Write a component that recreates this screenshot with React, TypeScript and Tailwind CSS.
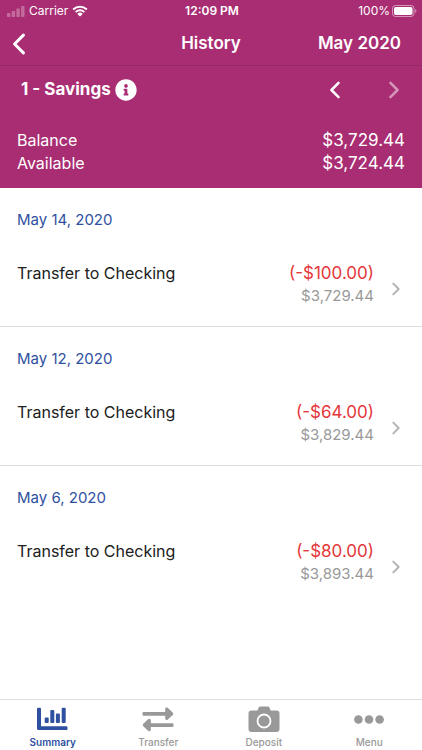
import type { ReactNode } from "react";
import { FaInfoCircle } from "react-icons/fa";

type Transaction = { date: string; title: string; amount: string; balance: string };

const transactions: Transaction[] = [
  { date: "May 14, 2020", title: "Transfer to Checking", amount: "(-$100.00)", balance: "$3,729.44" },
  { date: "May 12, 2020", title: "Transfer to Checking", amount: "(-$64.00)", balance: "$3,829.44" },
  { date: "May 6, 2020", title: "Transfer to Checking", amount: "(-$80.00)", balance: "$3,893.44" },
];

function Chevron({ left = false, className }: { left?: boolean; className: string }) {
  return (
    <svg viewBox="0 0 10 18" fill="none" stroke="currentColor" strokeLinecap="round" strokeLinejoin="round" className={className} aria-hidden="true">
      <path d={left ? "M9 1 1 9l8 8" : "M1 1l8 8-8 8"} vectorEffect="non-scaling-stroke" />
    </svg>
  );
}

function StatusBar() {
  return (
    <div className="grid h-[22px] grid-cols-[1fr_auto_1fr] items-center pr-[5px] pl-[7px] text-xs">
      <div className="flex items-center gap-1">
        <svg viewBox="0 0 18 12" className="h-3 w-[18px] fill-white/30" aria-hidden="true">
          <rect x="0" y="8" width="3.4" height="4" rx="0.7" />
          <rect x="4.7" y="6" width="3.4" height="6" rx="0.7" />
          <rect x="9.4" y="3.5" width="3.4" height="8.5" rx="0.7" />
          <rect x="14.1" y="1" width="3.4" height="11" rx="0.7" />
        </svg>
        <span>Carrier</span>
        <svg viewBox="0 0 16 12" className="h-3 w-4" aria-hidden="true">
          <path d="M1.2 4.5a9.8 9.8 0 0 1 13.6 0M3.7 7.1a6.2 6.2 0 0 1 8.6 0" fill="none" stroke="currentColor" strokeWidth="2" />
          <path d="M8 11.6 5.3 8.9a3.9 3.9 0 0 1 5.4 0Z" fill="currentColor" />
        </svg>
      </div>
      <span className="text-center font-semibold">12:09 PM</span>
      <div className="flex items-center justify-end gap-[2px]">
        <span>100%</span>
        <svg viewBox="0 0 25 12" className="h-3 w-[25px]" aria-hidden="true">
          <rect x="0.5" y="0.5" width="21.5" height="11" rx="3" fill="none" stroke="currentColor" strokeOpacity="0.5" />
          <rect x="2" y="2" width="18.5" height="8" rx="1.7" fill="currentColor" />
          <path d="M23.2 4v4c1.6-.7 1.6-3.3 0-4Z" fill="currentColor" fillOpacity="0.5" />
        </svg>
      </div>
    </div>
  );
}

function TransactionRow({ item, last }: { item: Transaction; last: boolean }) {
  return (
    <li className={last ? "" : "border-b border-[#dedee0]"}>
      <h2 className="px-[17px] pt-[22px] text-[15px] leading-5 text-[#2f50a0]">{item.date}</h2>
      <button type="button" className="flex w-full items-start pt-[31px] pr-[22px] pb-[19px] pl-[17px] text-left">
        <span className="flex-1 text-base leading-6 text-[#202020]">{item.title}</span>
        <span className="flex flex-col text-right">
          <span className="text-[17px] leading-6 text-[#e5373b]">{item.amount}</span>
          <span className="text-[15px] leading-[22px] text-[#999999]">{item.balance}</span>
        </span>
        <Chevron className="mt-[22px] ml-[18px] h-3 w-2 overflow-visible stroke-2 text-[#b4b4b4]" />
      </button>
    </li>
  );
}

function Tab({ label, active = false, children }: { label: string; active?: boolean; children: ReactNode }) {
  return (
    <button
      type="button"
      aria-current={active ? "page" : undefined}
      className={`flex flex-col items-center pt-1 text-[10px] leading-4 ${active ? "font-semibold text-[#2f50a0]" : "font-medium text-[#999999]"}`}
    >
      <span className="flex h-[30px] items-center">{children}</span>
      {label}
    </button>
  );
}

export default function App() {
  return (
    <div className="flex min-h-screen flex-col bg-white font-['Inter','Liberation_Sans',sans-serif]">
      <header className="bg-[#a92d72] text-white">
        <StatusBar />
        <div className="grid h-11 grid-cols-[1fr_auto_1fr] items-center border-b border-[#96286a] px-[21px] text-[17px] font-semibold">
          <button type="button" aria-label="Back" className="-ml-2 justify-self-start">
            <Chevron left className="h-5 w-3 overflow-visible stroke-3" />
          </button>
          <h1>History</h1>
          <button type="button" className="justify-self-end">May 2020</button>
        </div>
        <div className="flex h-12 items-center pr-[23px] pl-[21px]">
          <span className="text-[17px] font-bold">1 - Savings</span>
          <button type="button" aria-label="Account details" className="ml-1">
            <FaInfoCircle className="size-[22px]" />
          </button>
          <div className="ml-auto flex gap-[49px]">
            <button type="button" aria-label="Previous account">
              <Chevron left className="h-4 w-[10px] overflow-visible stroke-[2.5]" />
            </button>
            <button type="button" aria-label="Next account" disabled className="text-white/50">
              <Chevron className="h-4 w-[10px] overflow-visible stroke-[2.5]" />
            </button>
          </div>
        </div>
        <dl className="grid grid-cols-2 px-[17px] pt-[15px] pb-[13px] text-[17px] leading-[23px]">
          <dt className="text-base leading-[23px]">Balance</dt>
          <dd className="text-right">$3,729.44</dd>
          <dt className="text-base leading-[23px]">Available</dt>
          <dd className="text-right">$3,724.44</dd>
        </dl>
      </header>
      <main className="flex-1">
        <ul>
          {transactions.map((item, i) => (
            <TransactionRow key={item.date} item={item} last={i === transactions.length - 1} />
          ))}
        </ul>
      </main>
      <nav className="grid h-[51px] grid-cols-4 border-t border-[#dedee0]">
        <Tab label="Summary" active>
          <svg viewBox="0 0 31 24" className="h-6 w-[31px]" fill="currentColor" aria-hidden="true">
            <path d="M0 2Q0 .8 1.2.8h1.6Q4 .8 4 2v17.3h25.3q1.2 0 1.2 1.2v1.4q0 1.2-1.2 1.2H1.6Q0 23.1 0 21.5Z" />
            <rect x="7.7" y="10.5" width="4" height="5.5" rx="1" />
            <rect x="13.3" y="3" width="4" height="13" rx="1" />
            <rect x="18.9" y="6.5" width="4" height="9.5" rx="1" />
            <rect x="24.7" y="0.8" width="4" height="15.2" rx="1" />
          </svg>
        </Tab>
        <Tab label="Transfer">
          <svg viewBox="0 0 32 25" className="h-[25px] w-8" fill="currentColor" aria-hidden="true">
            <path d="M1.5 5h21.7V2.2c0-1.7 1.5-2.4 2.7-1.3l4.8 4.5q1.2 1.3 0 2.6l-4.8 4.5c-1.2 1.1-2.7.4-2.7-1.3V8.7H1.5Q.5 8.7.5 7.7V6Q.5 5 1.5 5Z" />
            <path d="M30.5 16.3H8.8v-2.8c0-1.7-1.5-2.4-2.7-1.3l-4.8 4.5q-1.2 1.3 0 2.6l4.8 4.5c1.2 1.1 2.7.4 2.7-1.3V20h21.7q1 0 1-1v-1.7q0-1-1-1Z" />
          </svg>
        </Tab>
        <Tab label="Deposit">
          <svg viewBox="0 0 32 28" className="h-7 w-8" aria-hidden="true">
            <path d="M3.5 5.5h6l1-2.7Q11.2 1.5 12.6 1.5h7q1.4 0 2 1.3l1 2.7h5.9q3 0 3 3v15.5q0 3-3 3h-25q-3 0-3-3V8.5q0-3 3-3Z" fill="currentColor" />
            <circle cx="16" cy="16" r="6.5" fill="none" stroke="white" strokeWidth="1.8" />
          </svg>
        </Tab>
        <Tab label="Menu">
          <svg viewBox="0 0 30 9" className="h-[9px] w-[30px]" fill="currentColor" aria-hidden="true">
            <circle cx="4.4" cy="4.5" r="4.3" />
            <circle cx="15" cy="4.5" r="4.3" />
            <circle cx="25.6" cy="4.5" r="4.3" />
          </svg>
        </Tab>
      </nav>
    </div>
  );
}
